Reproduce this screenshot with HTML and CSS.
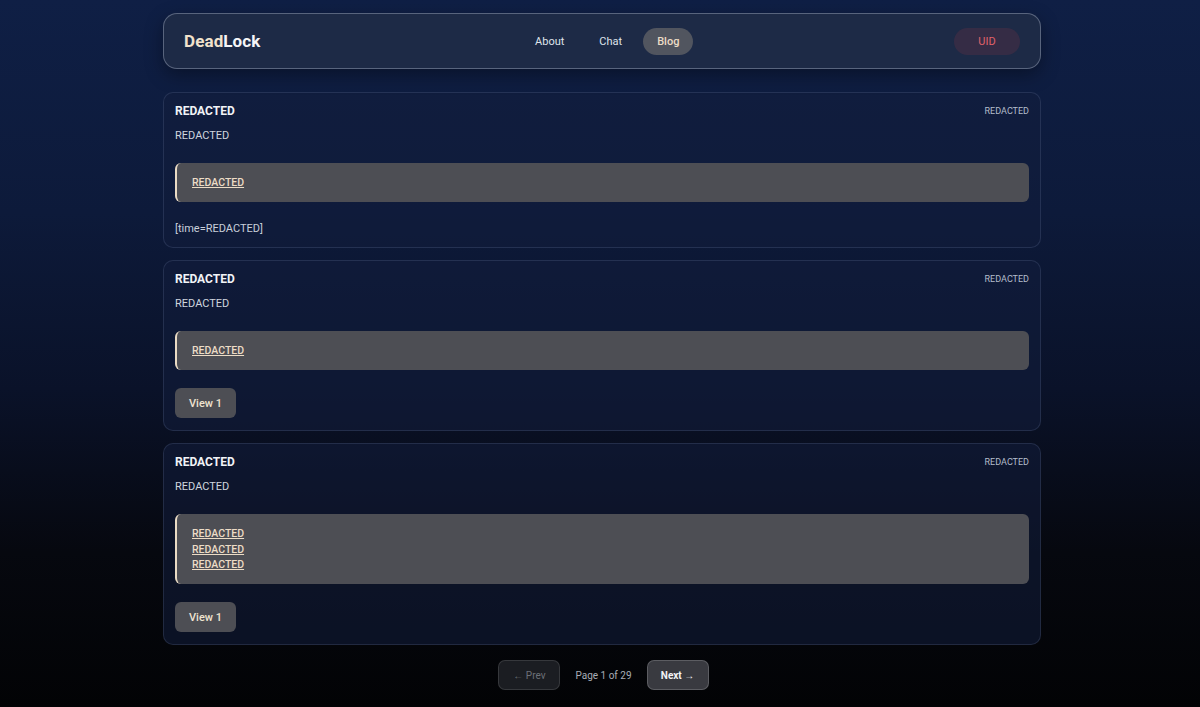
FILE: index.html
```html
<!DOCTYPE html>
<html lang="en">
<head>
<meta charset="utf-8">
<title>DeadLock — Blog</title>
<link rel="stylesheet" href="styles.css">
</head>
<body>
<div class="page">
  <header class="topbar">
    <div class="logo"><span class="logo-a">Dead</span><span class="logo-b">Lock</span></div>
    <nav class="nav">
      <a class="nav-link">About</a>
      <a class="nav-link">Chat</a>
      <a class="nav-link active">Blog</a>
    </nav>
    <div class="uid">UID</div>
  </header>

  <main class="posts">
    <article class="card">
      <div class="card-head">
        <h2 class="card-title">REDACTED</h2>
        <span class="card-meta">REDACTED</span>
      </div>
      <p class="card-sub">REDACTED</p>
      <div class="quote">
        <a class="quote-link">REDACTED</a>
      </div>
      <p class="card-time">[time=REDACTED]</p>
    </article>

    <article class="card">
      <div class="card-head">
        <h2 class="card-title">REDACTED</h2>
        <span class="card-meta">REDACTED</span>
      </div>
      <p class="card-sub">REDACTED</p>
      <div class="quote">
        <a class="quote-link">REDACTED</a>
      </div>
      <button class="view-btn">View 1</button>
    </article>

    <article class="card">
      <div class="card-head">
        <h2 class="card-title">REDACTED</h2>
        <span class="card-meta">REDACTED</span>
      </div>
      <p class="card-sub">REDACTED</p>
      <div class="quote">
        <a class="quote-link">REDACTED</a>
        <a class="quote-link">REDACTED</a>
        <a class="quote-link">REDACTED</a>
      </div>
      <button class="view-btn">View 1</button>
    </article>
  </main>

  <div class="pager">
    <button class="pager-btn disabled">← Prev</button>
    <span class="pager-info">Page 1 of 29</span>
    <button class="pager-btn next">Next →</button>
  </div>
</div>
</body>
</html>
```

FILE: styles.css
```css
* { box-sizing: border-box; }

html, body {
  margin: 0;
  padding: 0;
}

body {
  min-height: 707px;
  padding-left: 4px;
  font-family: Roboto, "Liberation Sans", Arial, sans-serif;
  color: #e6e9f0;
  background: linear-gradient(180deg, #0f1f45 0%, #0d1a3a 30%, #0a1229 55%, #06080f 78%, #020305 100%);
}

.page {
  width: 878px;
  margin: 0 auto;
  padding: 13px 0 18px;
}

.topbar {
  height: 56px;
  display: flex;
  align-items: center;
  justify-content: space-between;
  padding: 0 20px;
  background: #1d2a46;
  border: 1px solid rgba(200, 210, 230, 0.35);
  border-radius: 14px;
  box-shadow: 0 6px 18px rgba(0, 0, 0, 0.35);
}

.logo {
  font-size: 17px;
  font-weight: 700;
  letter-spacing: 0.1px;
}
.logo-a { color: #f1e2cc; }
.logo-b { color: #f4f5f8; }

.nav {
  display: flex;
  gap: 7px;
}

.nav-link {
  height: 27px;
  padding: 0 14px;
  display: flex;
  align-items: center;
  font-size: 11px;
  color: #dfe3ea;
  border-radius: 14px;
  cursor: pointer;
}

.nav-link.active {
  background: #51555f;
  color: #ecdcc6;
  font-weight: 500;
}

.uid {
  width: 66px;
  height: 27px;
  display: flex;
  align-items: center;
  justify-content: center;
  font-size: 11px;
  color: #e0626a;
  background: rgba(120, 50, 70, 0.28);
  border-radius: 14px;
}

.posts {
  display: flex;
  flex-direction: column;
  gap: 12px;
  margin-top: 23px;
}

.card {
  padding: 10px 11px 12px;
  background: rgba(18, 30, 60, 0.55);
  border: 1px solid rgba(150, 170, 210, 0.16);
  border-radius: 10px;
  display: flex;
  flex-direction: column;
  align-items: flex-start;
}

.card-head {
  width: 100%;
  display: flex;
  justify-content: space-between;
  align-items: center;
  height: 16px;
}

.card-title {
  margin: 0;
  font-size: 12px;
  font-weight: 700;
  color: #f1f3f7;
  line-height: 16px;
}

.card-meta {
  font-size: 9px;
  color: #b4bccb;
}

.card-sub {
  margin: 9px 0 0;
  font-size: 11px;
  line-height: 16px;
  color: #cfd5df;
}

.quote {
  width: 100%;
  margin-top: 19px;
  padding: 12px 16px 11.5px 15px;
  background: #4d4e54;
  border-left: 2px solid #eadbc4;
  border-radius: 6px;
  display: flex;
  flex-direction: column;
}

.quote-link {
  font-size: 10.5px;
  line-height: 15.5px;
  font-weight: 500;
  color: #ecdcc6;
  text-decoration: underline;
  cursor: pointer;
}

.card-time {
  margin: 21px 0 0;
  font-size: 11px;
  line-height: 12px;
  color: #c8cfda;
}

.view-btn {
  margin-top: 18px;
  width: 61px;
  height: 30px;
  border: none;
  border-radius: 6px;
  background: #4d4e54;
  color: #efe3d0;
  font-family: inherit;
  font-size: 11px;
  font-weight: 500;
  cursor: pointer;
}

.pager {
  margin-top: 15px;
  display: flex;
  justify-content: center;
  align-items: center;
  gap: 15px;
  padding-left: 3px;
}

.pager-btn {
  width: 62px;
  height: 30px;
  border-radius: 7px;
  font-family: inherit;
  font-size: 10px;
  cursor: pointer;
}

.pager-btn.disabled {
  background: #1b1d22;
  border: 1px solid rgba(255, 255, 255, 0.12);
  color: #6c7078;
}

.pager-btn.next {
  background: #393a40;
  border: 1px solid rgba(255, 255, 255, 0.18);
  color: #f2f3f5;
  font-weight: 700;
}

.pager-info {
  font-size: 10px;
  color: #a8adb6;
}
```
